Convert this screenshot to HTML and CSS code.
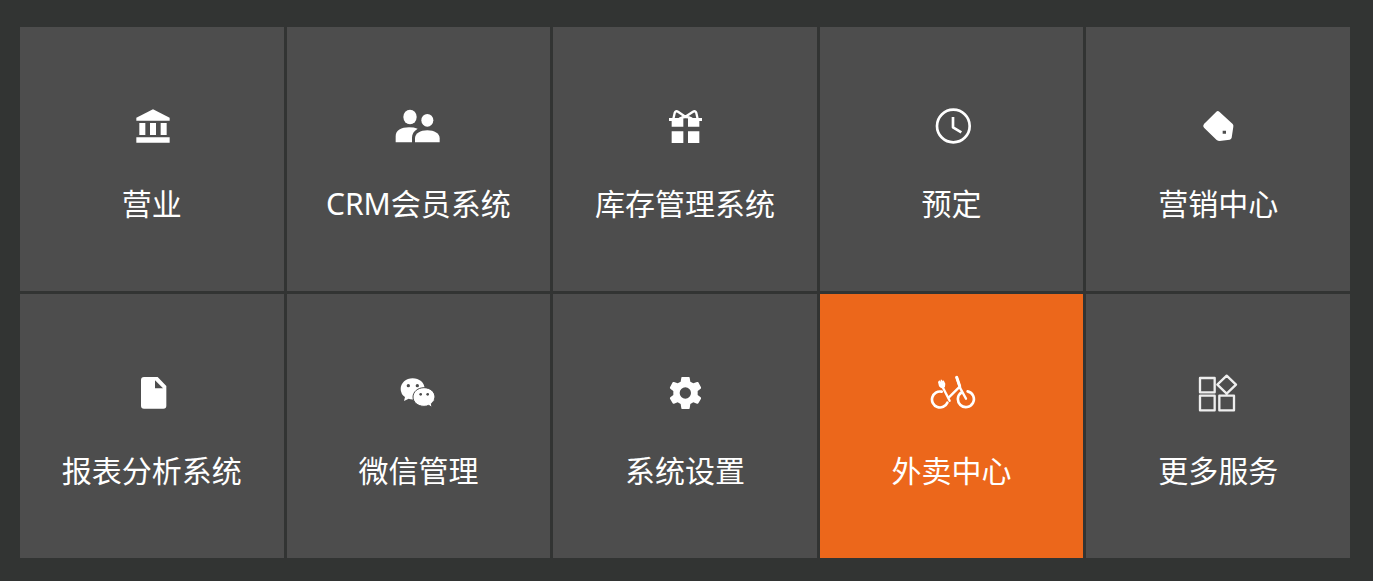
FILE: index.html
```
<!doctype html>
<html lang="zh-CN">
<head>
<meta charset="utf-8">
<meta name="viewport" content="width=device-width, initial-scale=1">
<title>功能导航</title>
<link rel="stylesheet" href="styles.css">
</head>
<body>
  <nav class="menu">
    <a class="tile" href="#business">
      <svg class="icon" viewBox="53 33 144 120" aria-hidden="true">
        <path d="M128 43 178 68V77H78V68Z"/>
        <path d="M87 84h18v36H87zM119 84h18v36h-18zM151 84h18v36h-18zM78 127h100v16H78z"/>
      </svg>
      <span class="label">营业</span>
    </a>
    <a class="tile" href="#crm">
      <svg class="icon" viewBox="58 33 144 120" aria-hidden="true">
        <ellipse cx="106" cy="66" rx="20" ry="22"/>
        <ellipse cx="158" cy="76" rx="18" ry="19"/>
        <path d="M63 142V124C63 106 80 97 103 97Q118 97 129 101C117 108 112 117 112 128V142Z"/>
        <path d="M121 142V130C121 115 137 106 158 106S195 115 195 130V142Z"/>
      </svg>
      <span class="label">CRM会员系统</span>
    </a>
    <a class="tile" href="#stock">
      <svg class="icon" viewBox="62 33 144 120" aria-hidden="true">
        <path d="M94 109h35v35H94zM143 109h34v35h-34z"/>
        <path d="M86 69H116L129 66V95H94V78H86ZM185 69H156L143 66V95H177V78H185Z"/>
        <path class="line ribbon" d="M99 72 103 54Q106 46 113 50L135 65 158 50Q165 46 168 54L172 72M117 71Q125 66 136 66T155 71"/>
      </svg>
      <span class="label">库存管理系统</span>
    </a>
    <a class="tile" href="#booking">
      <svg class="icon" viewBox="60 33 144 120" aria-hidden="true">
        <circle class="line ring" cx="136" cy="93" r="49"/>
        <path class="line hands" d="M135 66V97L160 112"/>
      </svg>
      <span class="label">预定</span>
    </a>
    <a class="tile" href="#marketing">
      <svg class="icon" viewBox="61 33 144 120" aria-hidden="true">
        <path fill-rule="evenodd" d="M128 50Q132 46 137 50L177 87Q180 90 179 95L174 128Q173 133 168 134L138 138Q133 138 129 135L91 98Q86 93 91 87ZM147 107V116H157V107Z"/>
      </svg>
      <span class="label">营销中心</span>
    </a>
    <a class="tile" href="#reports">
      <svg class="icon" viewBox="53 30 144 120" aria-hidden="true">
        <path fill-rule="evenodd" d="M101 42H142L168 69V128Q168 137 159 137H101Q92 137 92 128V51Q92 42 101 42ZM134 52V76H158Z"/>
      </svg>
      <span class="label">报表分析系统</span>
    </a>
    <a class="tile" href="#wechat">
      <svg class="icon" viewBox="58 30 144 120" aria-hidden="true">
        <path d="M114 46C94 46 78 60 78 78Q78 93 91 102L88 114 102 107Q108 110 120 109L150 76C149 59 134 46 114 46Z"/>
        <path class="bubble" d="M148 74C130 74 115 86 115 102S130 130 148 130Q156 130 162 127L172 133 170 122Q181 114 181 102C181 86 166 74 148 74Z"/>
        <g class="eyes">
          <circle cx="101" cy="68" r="5"/>
          <circle cx="128" cy="68" r="5"/>
          <circle cx="138" cy="94" r="4"/>
          <circle cx="159" cy="94" r="4"/>
        </g>
      </svg>
      <span class="label">微信管理</span>
    </a>
    <a class="tile" href="#settings">
      <svg class="icon" viewBox="62 30 144 120" aria-hidden="true">
        <path fill-rule="evenodd" d="M125 42H146Q148 42 148 44L150 56 159 61 170 57Q173 56 174 58L182 73Q183 75 181 77L172 84V96L181 103Q183 105 182 107L174 121Q173 123 170 122L159 118 150 123 148 136Q148 138 146 138H125Q123 138 123 136L121 123 112 118 101 122Q98 123 97 121L89 107Q88 105 90 103L99 96V84L90 77Q88 75 89 73L97 58Q98 56 101 57L112 61 121 56 123 44Q123 42 125 42ZM135 73A17 17 0 1 0 135 107A17 17 0 1 0 135 73Z"/>
      </svg>
      <span class="label">系统设置</span>
    </a>
    <a class="tile active" href="#takeaway">
      <svg class="icon" viewBox="60 30 144 120" aria-hidden="true">
        <path class="line wheel" d="M101 86A24 24 0 1 0 118 119M161 88A24 24 0 1 0 179 85"/>
        <path class="line frame" d="M102 68 125 113M122 104 156 70M146 43 157 76 174 107"/>
        <path d="M90 57 94 52 98 56 98 50 102 50 104 55 107 52 112 62Q113 72 106 76Q98 77 93 70Z"/>
        <path class="line stem" d="M146 43 155 69"/>
      </svg>
      <span class="label">外卖中心</span>
    </a>
    <a class="tile" href="#more">
      <svg class="icon" viewBox="61 30 144 120" aria-hidden="true">
        <path class="line grid" d="M79 45H123V88H79ZM79 98H123V142H79ZM137 98H181V142H137ZM159 38 187 65 159 92 131 65ZM159 92V98"/>
      </svg>
      <span class="label">更多服务</span>
    </a>
  </nav>
</body>
</html>
```
FILE: styles.css
```
* {
  box-sizing: border-box;
}

body {
  margin: 0;
  padding: 27px 23px 23px 20px;
  background-color: #323433;
  font-family: "Noto Sans", "Noto Sans CJK SC", sans-serif;
  color: #fff;
}

.menu {
  display: grid;
  grid-template-columns: repeat(5, 1fr);
  gap: 3px;
}

.tile {
  display: flex;
  flex-direction: column;
  align-items: center;
  gap: 38px;
  padding: 79px 0 67px;
  background-color: #4d4d4d;
  color: inherit;
  text-decoration: none;
}

.tile.active,
.tile:hover {
  background-color: #ec671b;
}

.label {
  font-size: 30px;
  line-height: 40px;
  white-space: nowrap;
}

/* icons */
.icon {
  width: 48px;
  height: 40px;
  fill: #fff;
}

.line {
  fill: none;
  stroke: #fff;
  stroke-linejoin: round;
}

.ribbon {
  stroke-width: 7;
}

.ring,
.hands {
  stroke-width: 8;
}

.bubble {
  stroke: #4d4d4d;
  stroke-width: 3;
}

.eyes {
  fill: #4d4d4d;
}

.wheel {
  stroke-width: 8;
  stroke-linecap: round;
}

.frame {
  stroke-width: 7;
  stroke-linecap: round;
}

.stem {
  stroke-width: 9;
  stroke-linecap: round;
}

.grid {
  stroke: #eee;
  stroke-width: 7;
}

@media (max-width: 1000px) {
  .menu {
    grid-template-columns: repeat(auto-fill, minmax(200px, 1fr));
  }
}
```
